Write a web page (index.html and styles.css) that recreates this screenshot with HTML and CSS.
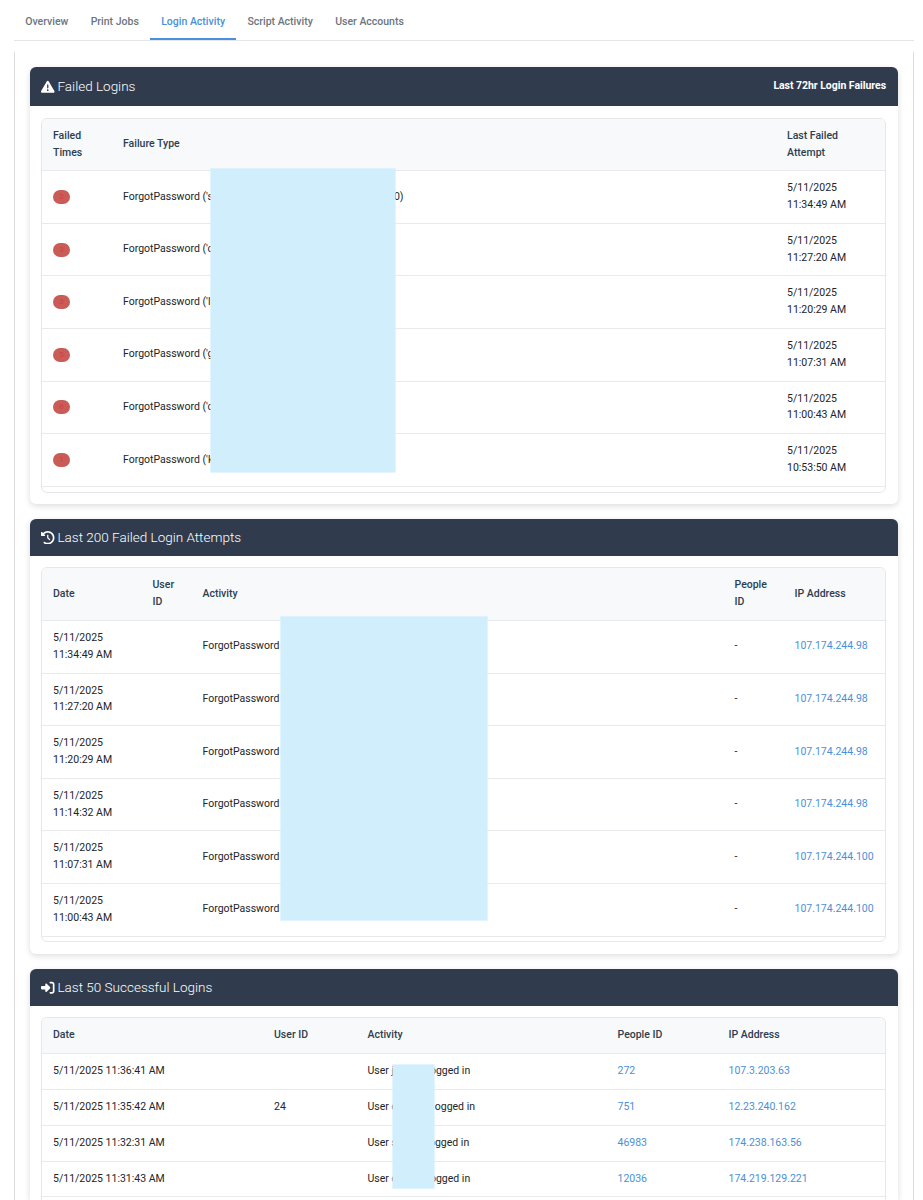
FILE: index.html
```html
<!DOCTYPE html>
<html lang="en">
<head>
<meta charset="utf-8">
<title>Login Activity</title>
<link rel="stylesheet" href="styles.css">
</head>
<body>
<nav class="tabs">
  <a class="tab">Overview</a>
  <a class="tab">Print Jobs</a>
  <a class="tab active">Login Activity</a>
  <a class="tab">Script Activity</a>
  <a class="tab">User Accounts</a>
</nav>
<main class="panel">
  <section class="card failed">
    <header class="card-head tall">
      <h2><svg class="icon" viewBox="0 0 512 512"><path d="M256 32c14.2 0 27.3 7.5 34.5 19.8l216 368c7.3 12.4 7.3 27.7 .2 40.1S486.3 480 472 480H40c-14.3 0-27.6-7.7-34.7-20.1s-7-27.8 .2-40.1l216-368C228.7 39.5 241.8 32 256 32zm0 128c-13.3 0-24 10.7-24 24V296c0 13.3 10.7 24 24 24s24-10.7 24-24V184c0-13.3-10.7-24-24-24zm32 224a32 32 0 1 0-64 0 32 32 0 1 0 64 0z"/></svg>Failed Logins</h2>
      <span class="note">Last 72hr Login Failures</span>
    </header>
    <div class="table">
      <div class="row head"><span>Failed<br>Times</span><span>Failure Type</span><span>Last Failed<br>Attempt</span></div>
      <div class="row"><span><b class="badge">2</b></span><span class="split">ForgotPassword ('s<i>0)</i></span><span>5/11/2025<br>11:34:49 AM</span></div>
      <div class="row"><span><b class="badge">3</b></span><span>ForgotPassword ('c</span><span>5/11/2025<br>11:27:20 AM</span></div>
      <div class="row"><span><b class="badge">3</b></span><span>ForgotPassword ('l</span><span>5/11/2025<br>11:20:29 AM</span></div>
      <div class="row"><span><b class="badge">5</b></span><span>ForgotPassword ('g</span><span>5/11/2025<br>11:07:31 AM</span></div>
      <div class="row"><span><b class="badge">6</b></span><span>ForgotPassword ('c</span><span>5/11/2025<br>11:00:43 AM</span></div>
      <div class="row"><span><b class="badge">1</b></span><span>ForgotPassword ('k</span><span>5/11/2025<br>10:53:50 AM</span></div>
    </div>
    <div class="mask"></div>
  </section>

  <section class="card attempts">
    <header class="card-head">
      <h2><svg class="icon" viewBox="0 0 512 512"><path d="M75 75L41 41C25.9 25.9 0 36.6 0 57.9V168c0 13.3 10.7 24 24 24H134.1c21.4 0 32.1-25.9 17-41l-30.8-30.8C155 85.5 203 64 256 64c106 0 192 86 192 192s-86 192-192 192c-40.8 0-78.6-12.7-109.7-34.4c-14.5-10.1-34.4-6.6-44.6 7.9s-6.6 34.4 7.9 44.6C151.2 495 201.7 512 256 512c141.4 0 256-114.6 256-256S397.4 0 256 0C185.3 0 121.3 28.7 75 75zm181 53c-13.3 0-24 10.7-24 24V256c0 6.4 2.5 12.5 7 17l72 72c9.4 9.4 24.6 9.4 33.9 0s9.4-24.6 0-33.9l-65-65V152c0-13.3-10.7-24-24-24z"/></svg>Last 200 Failed Login Attempts</h2>
    </header>
    <div class="table">
      <div class="row head"><span>Date</span><span>User<br>ID</span><span>Activity</span><span>People<br>ID</span><span>IP Address</span></div>
      <div class="row"><span>5/11/2025<br>11:34:49 AM</span><span></span><span>ForgotPassword</span><span>-</span><a>107.174.244.98</a></div>
      <div class="row"><span>5/11/2025<br>11:27:20 AM</span><span></span><span>ForgotPassword</span><span>-</span><a>107.174.244.98</a></div>
      <div class="row"><span>5/11/2025<br>11:20:29 AM</span><span></span><span>ForgotPassword</span><span>-</span><a>107.174.244.98</a></div>
      <div class="row"><span>5/11/2025<br>11:14:32 AM</span><span></span><span>ForgotPassword</span><span>-</span><a>107.174.244.98</a></div>
      <div class="row"><span>5/11/2025<br>11:07:31 AM</span><span></span><span>ForgotPassword</span><span>-</span><a>107.174.244.100</a></div>
      <div class="row"><span>5/11/2025<br>11:00:43 AM</span><span></span><span>ForgotPassword</span><span>-</span><a>107.174.244.100</a></div>
    </div>
    <div class="mask"></div>
  </section>

  <section class="card logins">
    <header class="card-head">
      <h2><svg class="icon" viewBox="0 0 512 512"><path d="M217.9 105.9L340.7 228.7c7.2 7.2 11.3 17.1 11.3 27.3s-4.1 20.1-11.3 27.3L217.9 406.1c-6.4 6.4-15 9.9-24 9.9c-18.7 0-33.9-15.2-33.9-33.9l0-62.1L32 320c-17.7 0-32-14.3-32-32l0-64c0-17.7 14.3-32 32-32l128 0 0-62.1c0-18.7 15.2-33.9 33.9-33.9c9 0 17.6 3.6 24 9.9zM352 416l64 0c17.7 0 32-14.3 32-32l0-256c0-17.7-14.3-32-32-32l-64 0c-17.7 0-32-14.3-32-32s14.3-32 32-32l64 0c53 0 96 43 96 96l0 256c0 53-43 96-96 96l-64 0c-17.7 0-32-14.3-32-32s14.3-32 32-32z"/></svg>Last 50 Successful Logins</h2>
    </header>
    <div class="table">
      <div class="row head"><span>Date</span><span>User ID</span><span>Activity</span><span>People ID</span><span>IP Address</span></div>
      <div class="row"><span>5/11/2025 11:36:41 AM</span><span></span><span class="split w103">User j<i>ogged in</i></span><a>272</a><a>107.3.203.63</a></div>
      <div class="row"><span>5/11/2025 11:35:42 AM</span><span>24</span><span class="split w108">User c<i>ogged in</i></span><a>751</a><a>12.23.240.162</a></div>
      <div class="row"><span>5/11/2025 11:32:31 AM</span><span></span><span class="split w102">User s<i>ogged in</i></span><a>46983</a><a>174.238.163.56</a></div>
      <div class="row"><span>5/11/2025 11:31:43 AM</span><span></span><span class="split w103">User c<i>ogged in</i></span><a>12036</a><a>174.219.129.221</a></div>
    </div>
    <div class="mask"></div>
  </section>
</main>
</body>
</html>
```
FILE: styles.css
```css
* { box-sizing: border-box; }
body {
  margin: 0;
  background: #fff;
  color: #212529;
  font: 10.5px/16.8px Roboto, sans-serif;
}
.tabs {
  display: flex;
  height: 41px;
  margin: 0 9px 0 14px;
  border-bottom: 1px solid #e4e6e8;
}
.tab {
  height: 40px;
  padding: 13.6px 11.2px 0;
  border-bottom: 2px solid transparent;
  color: #6c757d;
  font-weight: 500;
}
.tab.active { color: #4a90d9; border-bottom-color: #4a90d9; }
.panel {
  display: flex;
  flex-direction: column;
  gap: 15px;
  height: 1148px;
  overflow: hidden;
  margin: 11px 9px 0 14px;
  padding: 15px 15px 0;
  border: 1px solid #d9dbdd;
  border-width: 0 1px;
}
.card {
  position: relative;
  flex: none;
  border-radius: 6px;
  background: #fff;
  box-shadow: 0 2px 6px rgba(0, 0, 0, .14);
}
.failed { height: 437px; }
.attempts { height: 435px; }
.logins { height: 231px; border-radius: 6px 6px 0 0; }
.card-head {
  display: flex;
  align-items: center;
  justify-content: space-between;
  height: 37px;
  padding: 0 12px 0 11px;
  border-radius: 6px 6px 0 0;
  background: #303c4d;
  color: #fff;
}
.card-head.tall { height: 39px; }
h2 {
  display: flex;
  align-items: center;
  gap: 3px;
  margin: 0;
  font-size: 13.5px;
  font-weight: 300;
}
.icon { width: 13.5px; height: 13.5px; fill: #fff; }
.note { font-weight: 700; letter-spacing: -.04px; }
.table {
  height: 375px;
  margin: 11px 12px 0 11px;
  overflow: hidden;
  border: 1px solid #e5e7ea;
  border-radius: 6px;
}
.tall + .table { margin-top: 12px; }
.logins .table {
  height: 183px;
  border-bottom: 0;
  border-radius: 6px 6px 0 0;
}
.row {
  display: grid;
  align-items: center;
  height: 52.62px;
  padding-left: 11px;
  border-bottom: 1px solid #e7e9ec;
}
.failed .row.head { height: 52.2px; }
.attempts .row.head { height: 53px; }
.logins .row { height: 35.9px; }
.failed .row { grid-template-columns: 70px 664px 1fr; }
.attempts .row { grid-template-columns: 99.5px 50px 532px 60px 1fr; }
.logins .row { grid-template-columns: 221px 93.5px 250px 111px 1fr; }
.row.head { background: #f8f9fb; color: #2c3e50; font-weight: 500; }
.row a { color: #4a90d9; }
.badge {
  display: block;
  width: 17px;
  height: 14px;
  border-radius: 7px;
  background: #c95c56;
  color: #d0434c;
  font-size: 8px;
  font-weight: 500;
  line-height: 13px;
  text-align: center;
}
.split { display: flex; justify-content: space-between; width: 280.5px; white-space: nowrap; }
.split i { font-style: normal; }
.w102 { width: 101.7px; }
.w103 { width: 102.7px; }
.w108 { width: 107.5px; }
/* Privacy masks laid over account names */
.mask {
  position: absolute;
  border: 1px solid rgba(209, 238, 253, .6);
  background: #d1eefd;
  background-clip: padding-box;
}
.failed .mask { left: 180px; top: 101px; width: 186px; height: 305px; }
.attempts .mask { left: 250px; top: 97px; width: 208px; height: 305px; }
.logins .mask { left: 362px; top: 95px; width: 43px; height: 125px; }
```
